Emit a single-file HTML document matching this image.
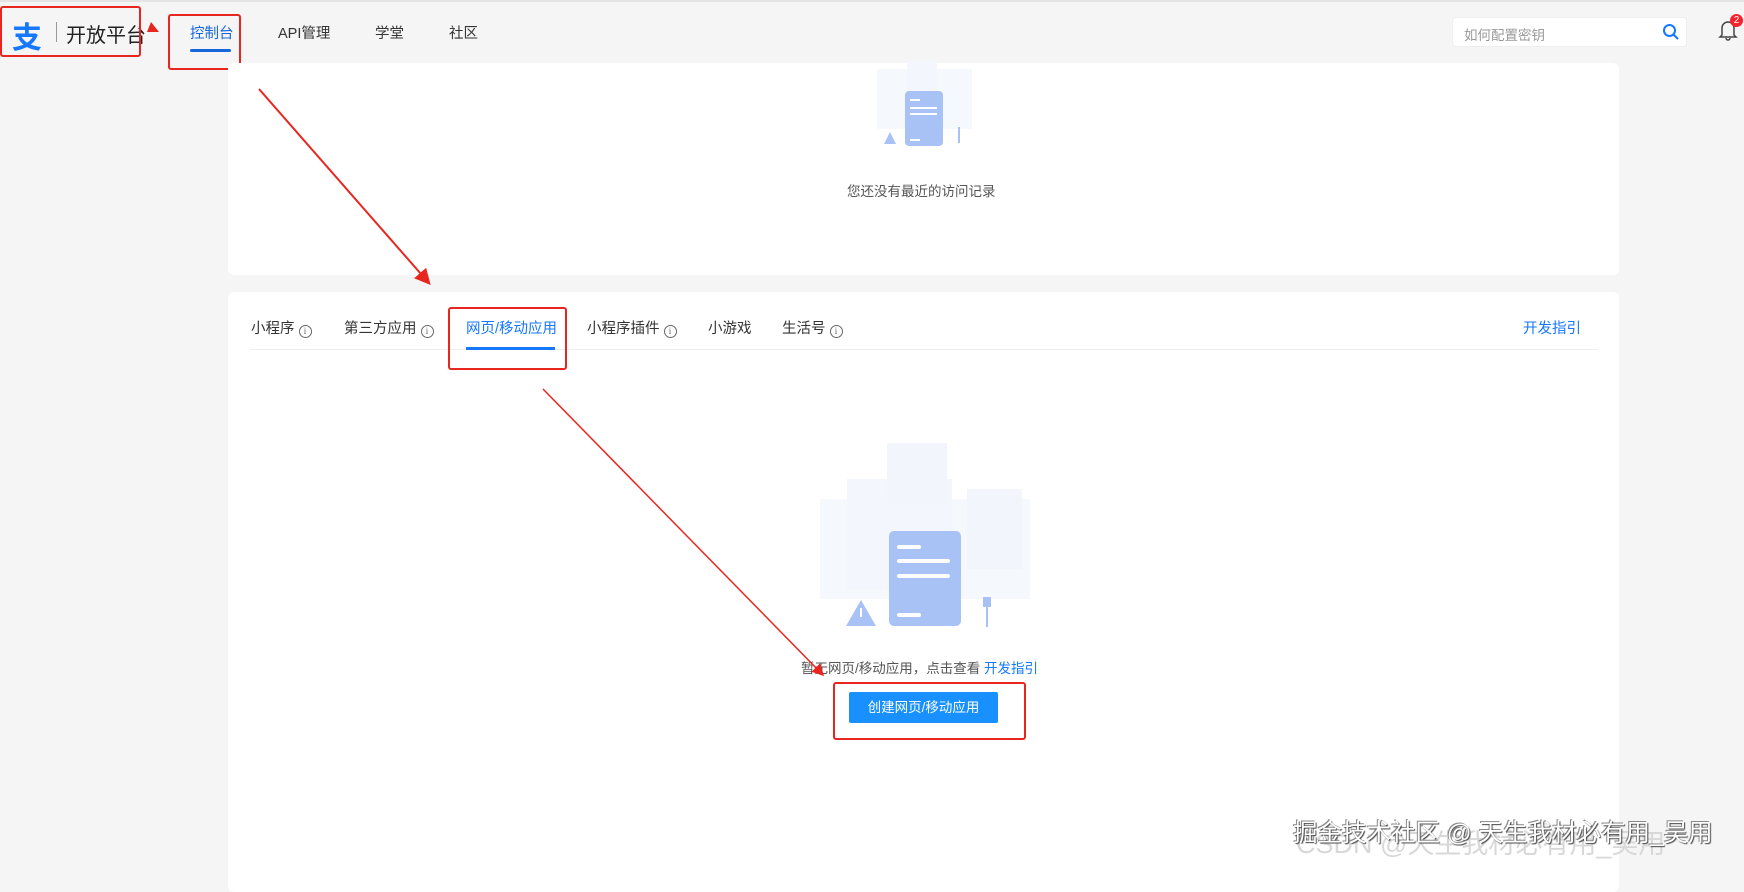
<!DOCTYPE html>
<html><head><meta charset="utf-8"><style>
*{margin:0;padding:0;box-sizing:border-box}
body{width:1744px;height:875px;background:#f5f5f5;font-family:"Liberation Sans","Noto Sans CJK SC",sans-serif;position:relative;overflow:hidden;color:#333}
.a{position:absolute;white-space:nowrap}
.card{position:absolute;background:#fff;border-radius:6px}
.rb{position:absolute;border:2px solid #e8261f;border-radius:3px}
.tab{position:absolute;top:317px;font-size:14.5px;color:#333}
.i{display:inline-block;width:13px;height:13px;border:1px solid #666;border-radius:50%;font-size:9px;line-height:11px;text-align:center;vertical-align:-1px;margin-left:4px;font-family:"Liberation Serif",serif;color:#666}
</style></head><body>
<div style="position:absolute;left:0;top:0;width:1744px;height:2px;background:#e4e4e4"></div>
<div class="a" style="left:12px;top:13px;font-size:30px;font-weight:bold;color:#1677ff">支</div>
<div class="a" style="left:56px;top:22px;width:1px;height:20px;background:#999"></div>
<div class="a" style="left:66px;top:19px;font-size:20px;color:#222">开放平台</div>
<div class="rb" style="left:0;top:6px;width:141px;height:51px"></div>
<svg class="a" style="left:145px;top:20px" width="16" height="14"><polygon points="2,12 14,12 6,2" fill="#e8261f"/></svg>
<div class="a" style="left:190px;top:22px;font-size:14.5px;color:#1667d9">控制台</div>
<div class="a" style="left:190px;top:49px;width:41px;height:3px;border-radius:2px;background:#1667d9"></div>
<div class="rb" style="left:168px;top:14px;width:73px;height:56px"></div>
<div class="a" style="left:278px;top:22px;font-size:14.5px;color:#333">API管理</div>
<div class="a" style="left:375px;top:22px;font-size:14.5px;color:#333">学堂</div>
<div class="a" style="left:449px;top:22px;font-size:14.5px;color:#333">社区</div>
<div class="a" style="left:1452px;top:17px;width:235px;height:30px;background:#fff;border-radius:4px;border:1px solid #eee"></div>
<div class="a" style="left:1464px;top:24px;font-size:13.5px;color:#999">如何配置密钥</div>
<svg class="a" style="left:1662px;top:23px" width="18" height="18"><circle cx="7.5" cy="7.5" r="5.5" fill="none" stroke="#1677ff" stroke-width="2"/><line x1="11.5" y1="11.5" x2="16" y2="16" stroke="#1677ff" stroke-width="2"/></svg>
<svg class="a" style="left:1718px;top:18px" width="20" height="24"><path d="M4 17V10a6 6 0 0 1 12 0v7l2 2H2z" fill="none" stroke="#444" stroke-width="1.5"/><path d="M8 20a2 2 0 0 0 4 0" fill="none" stroke="#444" stroke-width="1.5"/></svg>
<div class="a" style="left:1730px;top:14px;width:13px;height:13px;border-radius:50%;background:#f5222d;color:#fff;font-size:10px;line-height:13px;text-align:center">2</div>

<div class="card" style="left:228px;top:63px;width:1391px;height:212px"></div>
<svg class="a" style="left:867px;top:61px" width="112" height="90"><rect x="10" y="8" width="95" height="60" fill="#f5f8fd"/><rect x="40" y="0" width="30" height="30" fill="#f3f6fc"/><rect x="38" y="30" width="38" height="55" rx="4" fill="#a8c2f6"/><rect x="43" y="38" width="10" height="2" fill="#fff"/><rect x="43" y="46" width="27" height="2" fill="#fff"/><rect x="43" y="52" width="27" height="2" fill="#fff"/><rect x="43" y="78" width="10" height="2" fill="#fff"/><path d="M17 83l6-12 6 12z" fill="#a8c2f6"/><rect x="91" y="66" width="2" height="16" fill="#a8c2f6"/></svg>
<div class="a" style="left:847px;top:180px;font-size:13.5px;color:#555">您还没有最近的访问记录</div>

<div class="card" style="left:228px;top:292px;width:1391px;height:600px"></div>
<div class="tab" style="left:251px">小程序<span class="i">i</span></div>
<div class="tab" style="left:344px">第三方应用<span class="i">i</span></div>
<div class="tab" style="left:466px;color:#1677ff">网页/移动应用</div>
<div class="tab" style="left:587px">小程序插件<span class="i">i</span></div>
<div class="tab" style="left:708px">小游戏</div>
<div class="tab" style="left:782px">生活号<span class="i">i</span></div>
<div class="tab" style="left:1523px;color:#1677ff">开发指引</div>
<div class="a" style="left:251px;top:349px;width:1346px;height:1px;background:#eee"></div>
<div class="a" style="left:466px;top:347px;width:89px;height:3px;background:#1677ff"></div>
<div class="rb" style="left:448px;top:307px;width:119px;height:63px"></div>

<svg class="a" style="left:817px;top:439px" width="216" height="190"><rect x="3" y="60" width="210" height="100" fill="#f5f8fd"/><rect x="30" y="40" width="105" height="110" fill="#f3f6fc"/><rect x="70" y="4" width="60" height="60" fill="#f2f5fc"/><rect x="150" y="50" width="55" height="80" fill="#f2f5fc"/><rect x="72" y="92" width="72" height="95" rx="5" fill="#a8c2f6"/><rect x="80" y="106" width="24" height="4" rx="2" fill="#fff"/><rect x="80" y="120" width="53" height="4" rx="2" fill="#fff"/><rect x="80" y="135" width="53" height="4" rx="2" fill="#fff"/><rect x="80" y="174" width="24" height="4" rx="2" fill="#fff"/><path d="M29 187l15-26 15 26z" fill="#a8c2f6"/><rect x="43" y="169" width="2" height="9" fill="#fff"/><rect x="166" y="158" width="8" height="10" fill="#a8c2f6"/><rect x="169" y="168" width="2" height="20" fill="#a8c2f6"/></svg>
<div class="a" style="left:801px;top:657px;font-size:13.5px;color:#555">暂无网页/移动应用，点击查看 <span style="color:#1677ff">开发指引</span></div>
<div class="a" style="left:849px;top:692px;width:149px;height:31px;background:#1890ff;border-radius:2px;color:#fff;font-size:13.5px;line-height:31px;text-align:center">创建网页/移动应用</div>
<div class="rb" style="left:833px;top:682px;width:193px;height:58px"></div>

<svg class="a" style="left:0;top:0" width="1744" height="875"><defs><marker id="m" markerWidth="8" markerHeight="8" refX="6" refY="4" orient="auto"><path d="M0 0L8 4L0 8z" fill="#e8261f"/></marker></defs>
<line x1="259" y1="89" x2="428" y2="282" stroke="#e8261f" stroke-width="2" marker-end="url(#m)"/>
<line x1="543" y1="389" x2="822" y2="674" stroke="#e8261f" stroke-width="1.5" marker-end="url(#m)"/></svg>

<div class="a" style="left:1296px;top:822px;font-size:27px;color:#d8d8d8">CSDN @天生我材必有用_吴用</div>
<div class="a" style="left:1293px;top:814px;font-size:24.5px;color:#fff;text-shadow:1px 1px 1px #444,-1px -1px 0 #888">掘金技术社区 @ 天生我材必有用_吴用</div>
</body></html>
